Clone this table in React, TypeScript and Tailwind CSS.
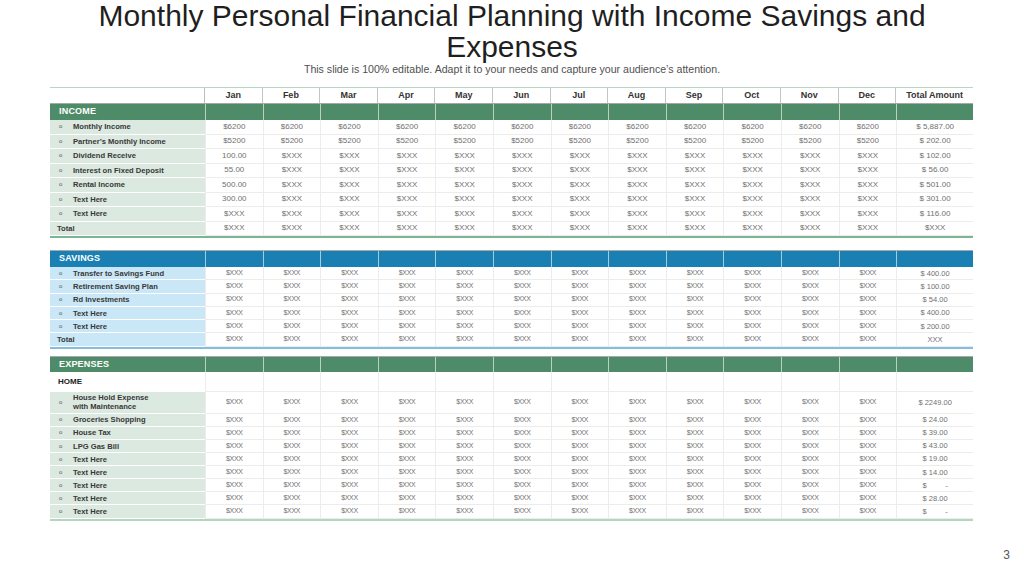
import React from 'react';

const MONTHS = ['Jan', 'Feb', 'Mar', 'Apr', 'May', 'Jun', 'Jul', 'Aug', 'Sep', 'Oct', 'Nov', 'Dec'];

const GRID = 'grid grid-cols-[155px_repeat(12,57.6px)_77px]';

type Row = { label: string; values: string[]; total: string; bullet?: boolean; twoLine?: boolean };

const xs = (n: number) => Array.from({ length: n }, () => '$XXX');

const income: Row[] = [
  { label: 'Monthly Income', values: Array(12).fill('$6200'), total: '$ 5,887.00', bullet: true },
  { label: 'Partner’s Monthly Income', values: Array(12).fill('$5200'), total: '$ 202.00', bullet: true },
  { label: 'Dividend Receive', values: ['100.00', ...xs(11)], total: '$ 102.00', bullet: true },
  { label: 'Interest on Fixed Deposit', values: ['55.00', ...xs(11)], total: '$ 56.00', bullet: true },
  { label: 'Rental Income', values: ['500.00', ...xs(11)], total: '$ 501.00', bullet: true },
  { label: 'Text Here', values: ['300.00', ...xs(11)], total: '$ 301.00', bullet: true },
  { label: 'Text Here', values: xs(12), total: '$ 116.00', bullet: true },
  { label: 'Total', values: xs(12), total: '$XXX' },
];

const savings: Row[] = [
  { label: 'Transfer to Savings Fund', values: xs(12), total: '$ 400.00', bullet: true },
  { label: 'Retirement Saving Plan', values: xs(12), total: '$ 100.00', bullet: true },
  { label: 'Rd Investments', values: xs(12), total: '$ 54.00', bullet: true },
  { label: 'Text Here', values: xs(12), total: '$ 400.00', bullet: true },
  { label: 'Text Here', values: xs(12), total: '$ 200.00', bullet: true },
  { label: 'Total', values: xs(12), total: 'XXX' },
];

const expenses: Row[] = [
  { label: 'House Hold Expense\nwith Maintenance', values: xs(12), total: '$ 2249.00', bullet: true, twoLine: true },
  { label: 'Groceries Shopping', values: xs(12), total: '$ 24.00', bullet: true },
  { label: 'House Tax', values: xs(12), total: '$ 39.00', bullet: true },
  { label: 'LPG Gas Bill', values: xs(12), total: '$ 43.00', bullet: true },
  { label: 'Text Here', values: xs(12), total: '$ 19.00', bullet: true },
  { label: 'Text Here', values: xs(12), total: '$ 14.00', bullet: true },
  { label: 'Text Here', values: xs(12), total: '$         -', bullet: true },
  { label: 'Text Here', values: xs(12), total: '$ 28.00', bullet: true },
  { label: 'Text Here', values: xs(12), total: '$         -', bullet: true },
];

const SectionHeader: React.FC<{ title: string; tone: 'green' | 'blue'; h: string }> = ({ title, tone, h }) => (
  <div
    className={`${GRID} ${h} ${
      tone === 'green' ? 'bg-[#4e8c69]' : 'bg-[#1a7fb2]'
    } border-t-[1.5px] border-[#a8a8a8]`}
  >
    <div className="flex items-center pl-[9px] text-[9px] font-bold text-white tracking-[0.2px]">{title}</div>
    {Array.from({ length: 13 }).map((_, i) => (
      <div key={i} className="border-l border-white/60" />
    ))}
  </div>
);

const DataRow: React.FC<{ row: Row; h: string; labelBg: string; big?: boolean }> = ({ row, h, labelBg, big }) => {
  const isTotal = row.label === 'Total';
  return (
    <div className={`${GRID} ${h}`}>
      <div className={`${labelBg} border-b border-white flex items-center text-[7.6px] font-bold text-[#383838] leading-[9px]`}>
        {row.bullet ? (
          <>
            <span className="w-[23px] pl-[9px] text-[6px] text-[#555] font-normal">o</span>
            <span className="whitespace-pre-line">{row.label}</span>
          </>
        ) : (
          <span className={isTotal ? 'pl-[7px] text-[7.6px]' : ''}>{row.label}</span>
        )}
      </div>
      {row.values.map((v, i) => (
        <div
          key={i}
          className={`border-l border-b border-[#ececec] flex items-center justify-center text-[#707070] ${
            big ? 'text-[8px]' : 'text-[7px] tracking-[-0.3px]'
          }`}
        >
          {v}
        </div>
      ))}
      <div
        className={`border-l border-b border-[#ececec] flex items-center justify-center whitespace-pre text-[#707070] ${
          big ? 'text-[8px]' : 'text-[7.5px]'
        }`}
      >
        {row.total}
      </div>
    </div>
  );
};

export default function App() {
  return (
    <div className="w-[1024px] h-[576px] bg-white relative overflow-hidden font-['Liberation_Sans',Arial,sans-serif]">
      <h1 className="text-center text-[30px] leading-[31px] text-[#1f1f1f]">
        Monthly Personal Financial Planning with Income Savings and
        <br />
        Expenses
      </h1>
      <p className="text-center text-[10.6px] leading-[12px] text-[#505050] mt-[1px]">
        This slide is 100% editable. Adapt it to your needs and capture your audience’s attention.
      </p>

      <div className="ml-[50px] w-[923px] mt-[12px]">
        {/* month header */}
        <div className={`${GRID} h-[16px] border-t-[1.5px] border-[#b9d6c4]`}>
          <div className="border-r border-[#bdbdbd]" />
          {MONTHS.map((m) => (
            <div key={m} className="border-r-[1.5px] border-[#c4c4c4] flex items-center justify-center text-[9px] font-bold text-[#333]">
              {m}
            </div>
          ))}
          <div className="flex items-center justify-center text-[9px] font-bold text-[#333]">Total Amount</div>
        </div>

        <SectionHeader title="INCOME" tone="green" h="h-[17px]" />
        {income.map((r, i) => (
          <DataRow key={i} row={r} h="h-[14.5px]" labelBg="bg-[#dbe9e0]" big />
        ))}
        <div className="h-[2px] bg-[#7db592]" />

        <div className="h-[12px]" />
        <SectionHeader title="SAVINGS" tone="blue" h="h-[17px]" />
        {savings.map((r, i) => (
          <DataRow key={i} row={r} h="h-[13.3px]" labelBg="bg-[#c9e7f6]" />
        ))}
        <div className="h-[2px] bg-[#82bedf]" />

        <div className="h-[7px]" />
        <SectionHeader title="EXPENSES" tone="green" h="h-[16px]" />
        <div className={`${GRID} h-[20px]`}>
          <div className="flex items-center pl-[8px] text-[8px] font-bold text-[#222]">HOME</div>
          {Array.from({ length: 13 }).map((_, i) => (
            <div key={i} className="border-l border-b border-[#ececec]" />
          ))}
        </div>
        {expenses.map((r, i) => (
          <DataRow key={i} row={r} h={r.twoLine ? 'h-[22px]' : 'h-[13.1px]'} labelBg="bg-[#dbe9e0]" />
        ))}
        <div className="h-[2px] bg-[#b2d6c0]" />
      </div>

      <div className="absolute right-[14px] bottom-[12px] text-[12px] text-[#555]">3</div>
    </div>
  );
}
